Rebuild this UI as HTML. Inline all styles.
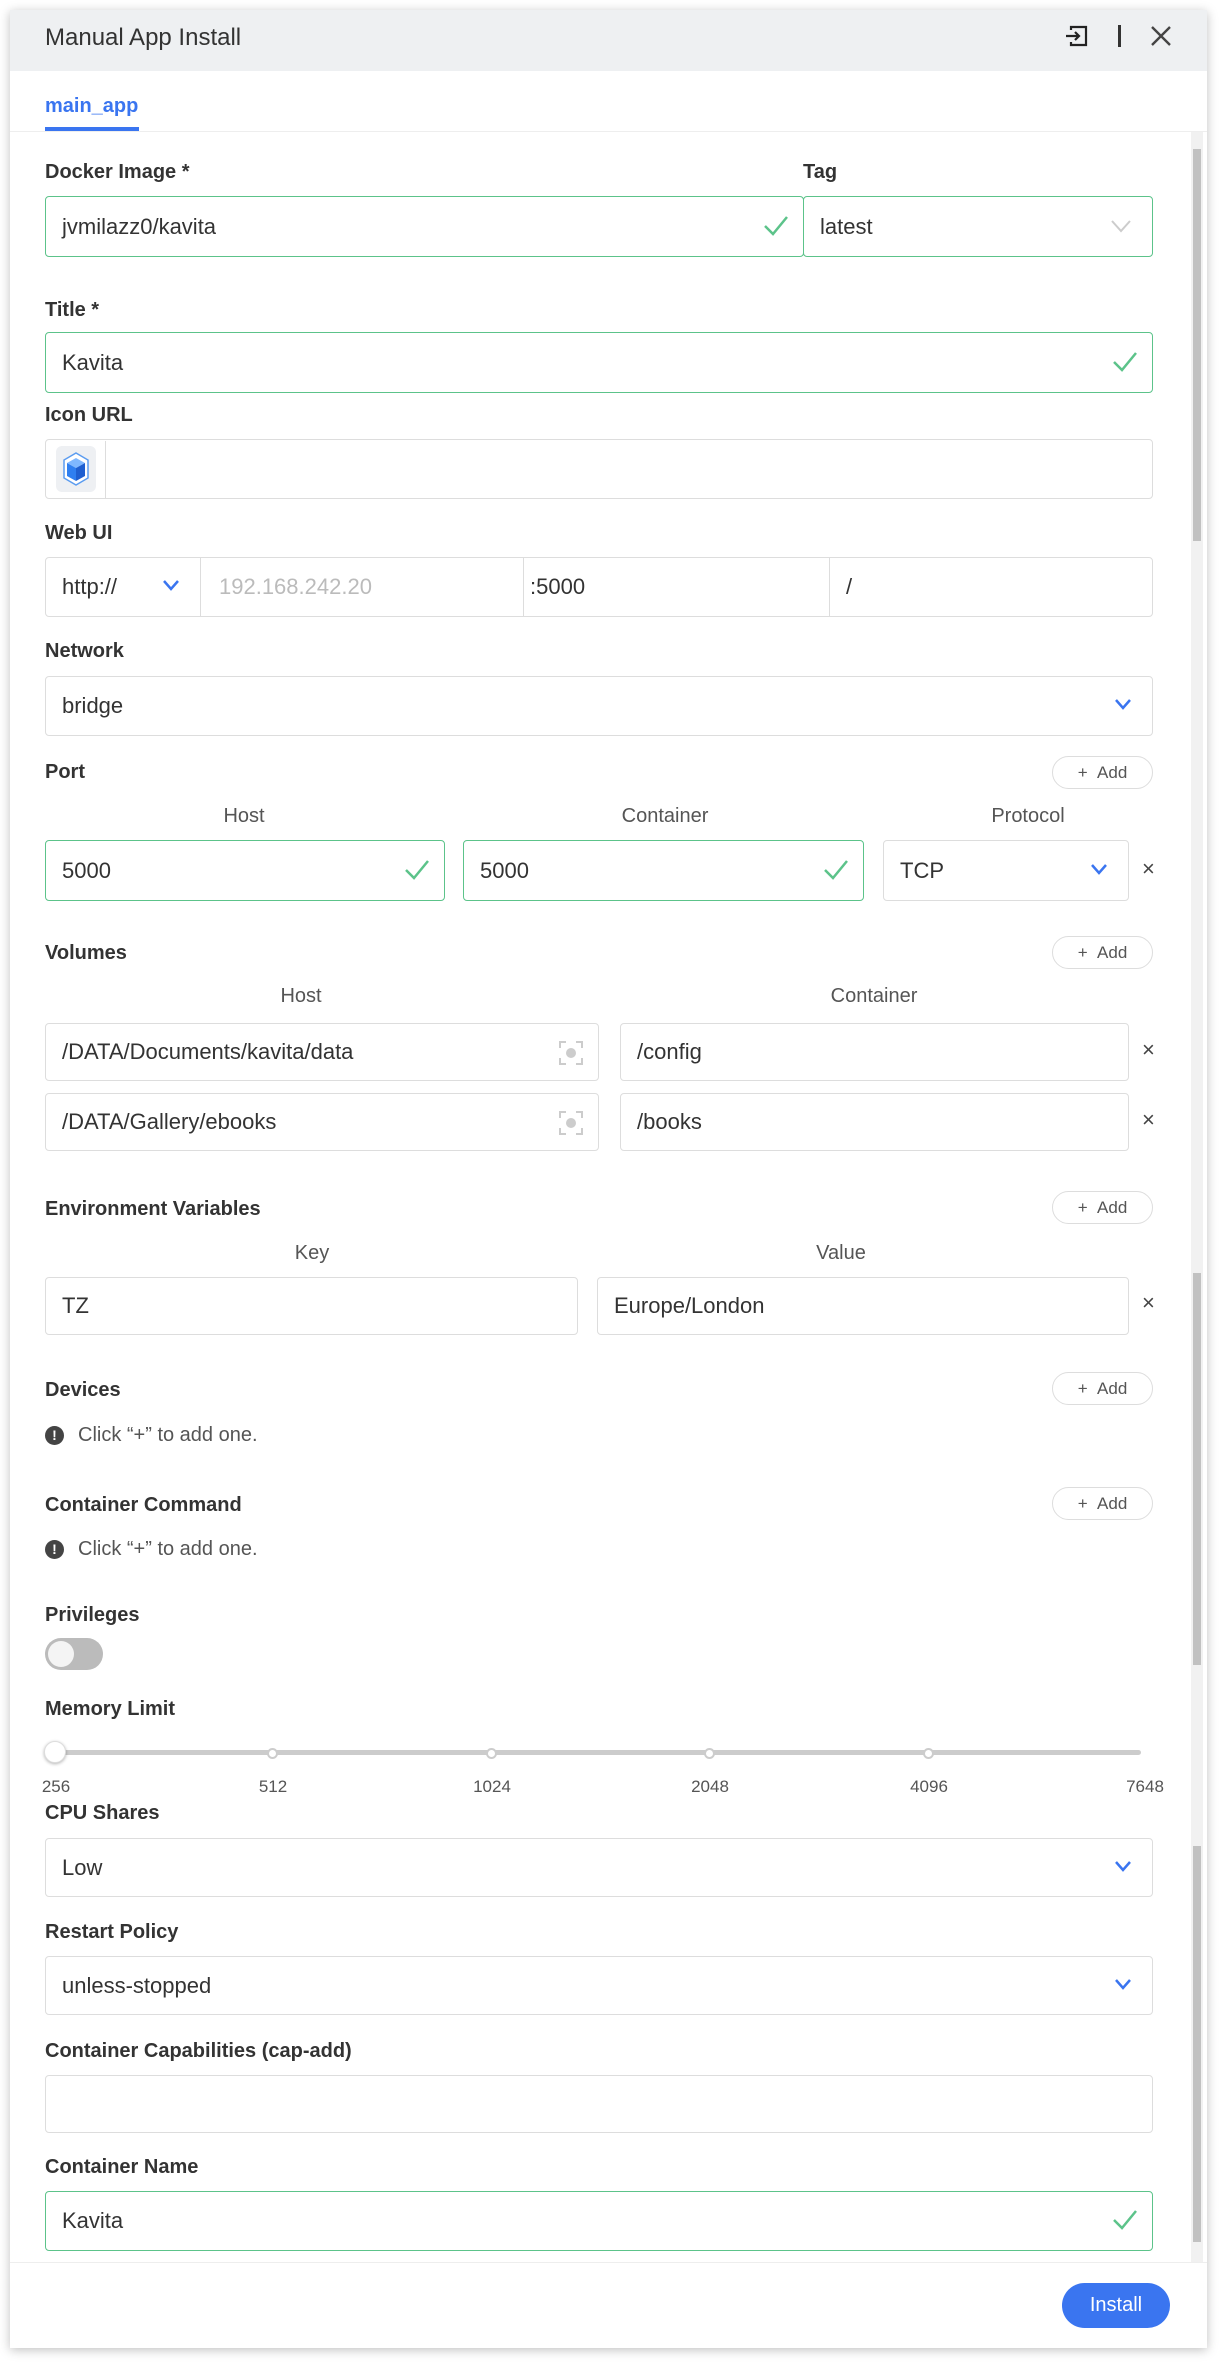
<!DOCTYPE html>
<html><head><meta charset="utf-8">
<style>
*{box-sizing:border-box;margin:0;padding:0}
body{width:1221px;height:2366px;background:#fff;font-family:"Liberation Sans",sans-serif;color:#333;position:relative;overflow:hidden}
.dlg{position:absolute;left:10px;top:10px;width:1197px;height:2338px;background:#fff;box-shadow:0 2px 10px rgba(0,0,0,.25)}
.hdr{position:absolute;left:0;top:0;width:100%;height:61px;background:#eef0f2}
.a{position:absolute}
.lbl{position:absolute;left:35px;font-weight:bold;font-size:20px;color:#333}
.in{position:absolute;border:1.5px solid #ddd;border-radius:4px;background:#fff;font-size:22px;color:#333;padding-left:16px;display:flex;align-items:center}
.ok{border-color:#5cc38a}
.chk{position:absolute;right:14px;top:50%;margin-top:-12px}
.dd{position:absolute;right:20px;top:50%;margin-top:-8px}
.sub{position:absolute;font-size:20px;color:#555;text-align:center;width:200px;transform:translateX(-50%)}
.add{position:absolute;left:1042px;width:101px;height:33px;border:1.5px solid #ddd;border-radius:17px;font-size:17px;color:#555;display:flex;align-items:center;justify-content:center}
.x{position:absolute;left:1132px;font-size:22px;color:#444}
.info{position:absolute;left:35px;font-size:20px;color:#555;display:flex;align-items:center}
.info i{display:inline-block;width:19px;height:19px;border-radius:50%;background:#444;color:#fff;font-style:normal;font-weight:bold;font-size:14px;text-align:center;line-height:19px;margin-right:14px}
.tk{position:absolute;font-size:17px;color:#555;transform:translateX(-50%)}
.dot{position:absolute;width:11px;height:11px;border:2px solid #ccc;border-radius:50%;background:#fff;top:1738px}
</style></head><body>
<div class="dlg">
<div class="hdr"></div>
<div class="a" style="left:35px;top:14px;font-size:24px;color:#333">Manual App Install</div>
<svg class="a" style="left:1055px;top:15px" width="24" height="22" viewBox="0 0 24 22"><path d="M6 5V2h15v18H6v-3" fill="none" stroke="#222" stroke-width="2.2"/><path d="M1 11h13M10 7l4 4-4 4" fill="none" stroke="#222" stroke-width="2.2"/></svg>
<div class="a" style="left:1108px;top:15px;width:3px;height:22px;background:#333"></div>
<svg class="a" style="left:1140px;top:15px" width="22" height="22"><path d="M2 2l18 18M20 2L2 20" stroke="#444" stroke-width="2.4"/></svg>
<div class="a" style="left:35px;top:85px;font-size:20px;font-weight:bold;color:#3a75f0">main_app</div>
<div class="a" style="left:35px;top:117px;width:94px;height:4px;background:#3a75f0"></div>
<div class="a" style="left:0;top:121px;width:100%;height:1px;background:#eee"></div>
<div class="a" style="left:1181px;top:122px;width:12px;height:2130px;background:#f1f1f1"></div>
<div class="a" style="left:1183px;top:139px;width:8px;height:392px;background:#c1c1c1"></div>
<div class="a" style="left:1183px;top:1263px;width:8px;height:392px;background:#c1c1c1"></div>
<div class="a" style="left:1183px;top:1836px;width:8px;height:396px;background:#c1c1c1"></div>

<div class="lbl" style="top:151px">Docker Image *</div>
<div class="lbl" style="left:793px;top:151px">Tag</div>
<div class="in ok" style="left:35px;top:186px;width:759px;height:61px">jvmilazz0/kavita<svg class="chk" width="26" height="22"><path d="M2 11l8 8L24 2" fill="none" stroke="#5cc38a" stroke-width="2.5"/></svg></div>
<div class="in ok" style="left:793px;top:186px;width:350px;height:61px">latest<svg class="dd" width="22" height="14"><path d="M2 2l9 10 9-10" fill="none" stroke="#ccc" stroke-width="2"/></svg></div>

<div class="lbl" style="top:289px">Title *</div>
<div class="in ok" style="left:35px;top:322px;width:1108px;height:61px">Kavita<svg class="chk" width="26" height="22"><path d="M2 11l8 8L24 2" fill="none" stroke="#5cc38a" stroke-width="2.5"/></svg></div>

<div class="lbl" style="top:394px">Icon URL</div>
<div class="in" style="left:35px;top:429px;width:1108px;height:60px;padding-left:0">
<div style="width:60px;height:57px;border-right:1.5px solid #ddd;display:flex;align-items:center;justify-content:center"><div style="width:40px;height:46px;background:#eef0f3;border-radius:6px;display:flex;align-items:center;justify-content:center"><svg width="26" height="34" viewBox="0 0 26 34"><path d="M13 1L25 8v18L13 33 1 26V8z" fill="#fff" stroke="#5b9cf0" stroke-width="1.5"/><path d="M13 6l9 5-9 5-9-5z" fill="#7fb8ff"/><path d="M4 11l9 5v13l-9-5z" fill="#2f7ff0"/><path d="M22 11l-9 5v13l9-5z" fill="#1f5fd0"/></svg></div></div></div>

<div class="lbl" style="top:512px">Web UI</div>
<div class="in" style="left:35px;top:547px;width:1108px;height:60px;padding-left:0">
<div style="width:155px;height:100%;border-right:1.5px solid #ddd;display:flex;align-items:center;padding-left:16px;position:relative">http://<svg class="dd" width="18" height="12"><path d="M2 2l7 8 7-8" fill="none" stroke="#3a75f0" stroke-width="2.5"/></svg></div>
<div style="width:323px;height:100%;border-right:1.5px solid #ddd;display:flex;align-items:center;padding-left:18px;color:#bbb">192.168.242.20</div>
<div style="width:306px;height:100%;border-right:1.5px solid #ddd;display:flex;align-items:center;padding-left:6px">:5000</div>
<div style="display:flex;align-items:center;padding-left:16px">/</div></div>

<div class="lbl" style="top:630px">Network</div>
<div class="in" style="left:35px;top:666px;width:1108px;height:60px">bridge<svg class="dd" width="18" height="12"><path d="M2 2l7 8 7-8" fill="none" stroke="#3a75f0" stroke-width="2.5"/></svg></div>

<div class="lbl" style="top:751px">Port</div>
<div class="add" style="top:746px">+&nbsp;&nbsp;Add</div>
<div class="sub" style="left:234px;top:795px">Host</div>
<div class="sub" style="left:655px;top:795px">Container</div>
<div class="sub" style="left:1018px;top:795px">Protocol</div>
<div class="in ok" style="left:35px;top:830px;width:400px;height:61px">5000<svg class="chk" width="26" height="22"><path d="M2 11l8 8L24 2" fill="none" stroke="#5cc38a" stroke-width="2.5"/></svg></div>
<div class="in ok" style="left:453px;top:830px;width:401px;height:61px">5000<svg class="chk" width="26" height="22"><path d="M2 11l8 8L24 2" fill="none" stroke="#5cc38a" stroke-width="2.5"/></svg></div>
<div class="in" style="left:873px;top:830px;width:246px;height:61px">TCP<svg class="dd" width="18" height="12"><path d="M2 2l7 8 7-8" fill="none" stroke="#3a75f0" stroke-width="2.5"/></svg></div>
<div class="x" style="top:846px">×</div>

<div class="lbl" style="top:932px">Volumes</div>
<div class="add" style="top:926px">+&nbsp;&nbsp;Add</div>
<div class="sub" style="left:291px;top:975px">Host</div>
<div class="sub" style="left:864px;top:975px">Container</div>
<div class="in" style="left:35px;top:1013px;width:554px;height:58px">/DATA/Documents/kavita/data<svg class="a" style="right:14px;top:16px" width="26" height="26"><path d="M2 8V2h6M18 2h6v6M24 18v6h-6M8 24H2v-6" fill="none" stroke="#ccc" stroke-width="2"/><circle cx="13" cy="13" r="5" fill="#ccc"/></svg></div>
<div class="in" style="left:610px;top:1013px;width:509px;height:58px">/config</div>
<div class="x" style="top:1027px">×</div>
<div class="in" style="left:35px;top:1083px;width:554px;height:58px">/DATA/Gallery/ebooks<svg class="a" style="right:14px;top:16px" width="26" height="26"><path d="M2 8V2h6M18 2h6v6M24 18v6h-6M8 24H2v-6" fill="none" stroke="#ccc" stroke-width="2"/><circle cx="13" cy="13" r="5" fill="#ccc"/></svg></div>
<div class="in" style="left:610px;top:1083px;width:509px;height:58px">/books</div>
<div class="x" style="top:1097px">×</div>

<div class="lbl" style="top:1188px">Environment Variables</div>
<div class="add" style="top:1181px">+&nbsp;&nbsp;Add</div>
<div class="sub" style="left:302px;top:1232px">Key</div>
<div class="sub" style="left:831px;top:1232px">Value</div>
<div class="in" style="left:35px;top:1267px;width:533px;height:58px">TZ</div>
<div class="in" style="left:587px;top:1267px;width:532px;height:58px">Europe/London</div>
<div class="x" style="top:1280px">×</div>

<div class="lbl" style="top:1369px">Devices</div>
<div class="add" style="top:1362px">+&nbsp;&nbsp;Add</div>
<div class="info" style="top:1414px"><i>!</i>Click “+” to add one.</div>

<div class="lbl" style="top:1484px">Container Command</div>
<div class="add" style="top:1477px">+&nbsp;&nbsp;Add</div>
<div class="info" style="top:1528px"><i>!</i>Click “+” to add one.</div>

<div class="lbl" style="top:1594px">Privileges</div>
<div class="a" style="left:35px;top:1628px;width:58px;height:32px;border-radius:16px;background:#bbb"></div>
<div class="a" style="left:38px;top:1631px;width:26px;height:26px;border-radius:50%;background:#f4f4f4"></div>

<div class="lbl" style="top:1688px">Memory Limit</div>
<div class="a" style="left:40px;top:1740px;width:1091px;height:5px;border-radius:3px;background:#ccc"></div>
<div class="a" style="left:34px;top:1731px;width:22px;height:22px;border-radius:50%;background:#fff;border:1.5px solid #ddd;box-shadow:0 1px 3px rgba(0,0,0,.3)"></div>
<div class="dot" style="left:257px"></div><div class="dot" style="left:476px"></div><div class="dot" style="left:694px"></div><div class="dot" style="left:913px"></div>
<div class="tk" style="left:46px;top:1767px">256</div><div class="tk" style="left:263px;top:1767px">512</div><div class="tk" style="left:482px;top:1767px">1024</div><div class="tk" style="left:700px;top:1767px">2048</div><div class="tk" style="left:919px;top:1767px">4096</div><div class="tk" style="left:1135px;top:1767px">7648</div>

<div class="lbl" style="top:1792px">CPU Shares</div>
<div class="in" style="left:35px;top:1828px;width:1108px;height:59px">Low<svg class="dd" width="18" height="12"><path d="M2 2l7 8 7-8" fill="none" stroke="#3a75f0" stroke-width="2.5"/></svg></div>

<div class="lbl" style="top:1911px">Restart Policy</div>
<div class="in" style="left:35px;top:1946px;width:1108px;height:59px">unless-stopped<svg class="dd" width="18" height="12"><path d="M2 2l7 8 7-8" fill="none" stroke="#3a75f0" stroke-width="2.5"/></svg></div>

<div class="lbl" style="top:2030px">Container Capabilities (cap-add)</div>
<div class="in" style="left:35px;top:2065px;width:1108px;height:58px"></div>

<div class="lbl" style="top:2146px">Container Name</div>
<div class="in ok" style="left:35px;top:2181px;width:1108px;height:60px">Kavita<svg class="chk" width="26" height="22"><path d="M2 11l8 8L24 2" fill="none" stroke="#5cc38a" stroke-width="2.5"/></svg></div>

<div class="a" style="left:0;top:2252px;width:100%;height:1px;background:#eee"></div>
<div class="a" style="left:1052px;top:2273px;width:108px;height:45px;border-radius:23px;background:#3a75f0;color:#fff;font-size:20px;display:flex;align-items:center;justify-content:center">Install</div>
</div>
</body></html>
